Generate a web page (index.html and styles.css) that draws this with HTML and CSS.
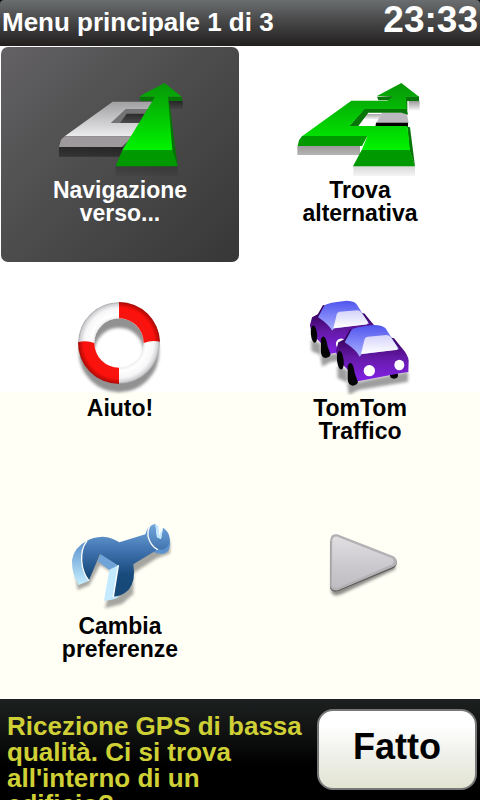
FILE: index.html
```html
<!DOCTYPE html>
<html lang="it">
<head>
    <meta charset="UTF-8">
    <meta name="viewport" content="width=device-width, initial-scale=1.0">
    <title>Menu principale</title>
    <link rel="stylesheet" href="styles.css">
</head>
<body>
<header class="topbar">
    <h1>Menu principale 1 di 3</h1>
    <time class="clock">23:33</time>
</header>

<!-- Main menu tiles -->
<main class="menu">
    <button type="button" class="tile selected">
        <svg class="icon" viewBox="0 -69 480 390" aria-hidden="true">
            <defs>
                <linearGradient id="road" x1="0" y1="0" x2="0" y2="1">
                    <stop offset="0" stop-color="#a09fa1"/>
                    <stop offset="1" stop-color="#ecebed"/>
                </linearGradient>
                <linearGradient id="green" gradientUnits="userSpaceOnUse" x1="0" y1="40" x2="0" y2="240">
                    <stop offset="0" stop-color="#079607"/>
                    <stop offset="1" stop-color="#00f400"/>
                </linearGradient>
                <linearGradient id="fade" x1="0" y1="0" x2="0" y2="1">
                    <stop offset="0" stop-color="#000" stop-opacity=".5"/>
                    <stop offset="1" stop-color="#000" stop-opacity=".05"/>
                </linearGradient>
            </defs>
            <path fill="url(#fade)" d="M57 231H250V260H57zM227 288H413V318H227z"/>
            <path fill="url(#fade)" d="M386 93H428V118H389z"/>
            <path fill="url(#fade)" d="M240 159L262 128H315L298 159z"/>
            <path fill="url(#road)" fill-rule="evenodd" d="M218 95H345L275 199H74zM258 118L213 159H300L325 118z"/>
            <path fill="#747374" d="M258 117L213 159H240L260 131H315L325 117z"/>
            <path fill="#9d999d" d="M74 199H280L245 231H57L63 209z"/>
            <path fill="#067506" d="M298 80L302 93H338L346 80zM384 80H425L427 93H387zM384 80L390 110L413 289L396 241L380 110z"/>
            <path fill="url(#green)" d="M374 39L425 80H384L397 241H247L345 80H298L316 69z"/>
            <path fill="#009a00" d="M247 240H397L413 289H227z"/>
        </svg>
        <span class="label">Navigazione<br>verso...</span>
    </button>

    <button type="button" class="tile">
        <svg class="icon" viewBox="0 -69 480 390" aria-hidden="true">
            <path fill="url(#fade)" opacity=".8" d="M52 228H240V255H52zM220 288H405V318H220z"/>
            <path fill="url(#fade)" opacity=".8" d="M386 93H419V121H386z"/>
            <path fill="url(#fade)" opacity=".7" d="M256 132H304L296 148H244z"/>
            <path fill="#bbb9bf" d="M306 128H380L386 160H288z"/>
            <path fill="#000" d="M288 158H384V172H286z"/>
            <path fill="#087508" d="M291 80L295 91H330L340 78zM378 79H417V93H382V134L376 118zM382 170L390 172L405 289L388 240z"/>
            <path fill="#087508" d="M254 115H378L384 134L365 128H265L235 168H208z"/>
            <path fill="url(#green)" d="M364 39L417 80H378L380 117H254L209 168H382L390 241H245L262 199H66L214 92H322L340 78H291z"/>
            <path fill="#009a00" d="M66 198H262L246 228H53L57 211zM245 240H389L405 289H219z"/>
        </svg>
        <span class="label">Trova<br>alternativa</span>
    </button>

    <button type="button" class="tile">
        <svg class="icon" viewBox="-60 -75 480 390" aria-hidden="true">
            <defs>
                <radialGradient id="ringWhite" gradientUnits="userSpaceOnUse" cx="177" cy="159" r="123">
                    <stop offset=".6" stop-color="#eeeeef"/>
                    <stop offset=".68" stop-color="#fff"/>
                    <stop offset=".85" stop-color="#f6f6f7"/>
                    <stop offset=".95" stop-color="#d2d2d5"/>
                    <stop offset="1" stop-color="#a2a3a5"/>
                </radialGradient>
                <radialGradient id="ringRed" gradientUnits="userSpaceOnUse" cx="177" cy="159" r="123">
                    <stop offset=".6" stop-color="#f51510"/>
                    <stop offset=".86" stop-color="#fd110c"/>
                    <stop offset="1" stop-color="#a80a06"/>
                </radialGradient>
                <filter id="soft" x="-20%" y="-20%" width="140%" height="140%">
                    <feGaussianBlur stdDeviation="5"/>
                </filter>
            </defs>
            <circle cx="177" cy="187" r="97" fill="none" stroke="#000" stroke-opacity=".43" stroke-width="46" filter="url(#soft)"/>
            <circle cx="177" cy="159" r="98" fill="none" stroke="url(#ringWhite)" stroke-width="49"/>
            <path fill="url(#ringRed)" d="M177 36A123 123 0 0 1 300 155Q276 149 251 159A74 74 0 0 0 177 85zM177 282A123 123 0 0 1 54 157Q78 149 103 159A74 74 0 0 0 177 233z"/>
        </svg>
        <span class="label">Aiuto!</span>
    </button>

    <button type="button" class="tile">
        <svg class="icon" viewBox="-30 -75 480 390" aria-hidden="true">
            <defs>
                <linearGradient id="carBody" gradientUnits="userSpaceOnUse" x1="0" y1="145" x2="0" y2="275">
                    <stop offset="0" stop-color="#38005c"/>
                    <stop offset=".45" stop-color="#651aa8"/>
                    <stop offset="1" stop-color="#8322e8"/>
                </linearGradient>
                <linearGradient id="carRoof" gradientUnits="userSpaceOnUse" x1="0" y1="105" x2="0" y2="195">
                    <stop offset="0" stop-color="#5055ed"/>
                    <stop offset="1" stop-color="#a5acff"/>
                </linearGradient>
                <linearGradient id="carGlass" x1="0" y1="0" x2="0" y2="1">
                    <stop offset="0" stop-color="#d4d2fa"/>
                    <stop offset="1" stop-color="#fff"/>
                </linearGradient>
                <g id="car">
                    <path fill="#000" fill-opacity=".38" filter="url(#soft)" d="M142 228L172 240L174 280L205 275L354 245V275L205 300L177 314L171 277L143 265z"/>
                    <ellipse cx="312" cy="256" rx="12" ry="10" fill="#050505"/>
                    <path fill="url(#carBody)" d="M163 148L145 157L138 183L144 210L174 240L196 275L334 249L355 246L356 212Q354 193 335 173L312 145L180 118z"/>
                    <path fill="url(#carRoof)" d="M184 120Q192 111 250 105Q273 104 286 114L327 178L215 193L209 200Q199 180 164 157z"/>
                    <path fill="url(#carGlass)" d="M224 146Q226 141 233 140L290 135Q299 136 302 141L322 171Q325 179 319 180L213 192z"/>
                    <ellipse cx="151" cy="211" rx="10" ry="28" fill="#050505" transform="rotate(-6 151 211)"/>
                    <path fill="#050505" d="M173 228Q177 216 184 220Q191 226 194 249L204 276Q201 286 188 287Q174 286 173 268z"/>
                    <ellipse cx="238" cy="242" rx="17" ry="17" fill="#fff"/>
                    <ellipse cx="328" cy="225" rx="15" ry="16" fill="#fff"/>
                </g>
            </defs>
            <use href="#car" transform="translate(-70 -66) scale(.94)"/>
            <use href="#car"/>
        </svg>
        <span class="label">TomTom<br>Traffico</span>
    </button>

    <button type="button" class="tile">
        <svg class="icon" viewBox="-30 -81 480 390" aria-hidden="true">
            <defs>
                <linearGradient id="steel" gradientUnits="userSpaceOnUse" x1="0" y1="45" x2="0" y2="220">
                    <stop offset="0" stop-color="#70a4da"/>
                    <stop offset=".45" stop-color="#3f72ae"/>
                    <stop offset=".85" stop-color="#184a7c"/>
                    <stop offset="1" stop-color="#164878"/>
                </linearGradient>
                <linearGradient id="steelEdge" x1="0" y1="0" x2="0" y2="1">
                    <stop offset="0" stop-color="#5a91cc"/>
                    <stop offset="1" stop-color="#c5eeff"/>
                </linearGradient>
            </defs>
            <path fill="#000" fill-opacity=".35" filter="url(#soft)" d="M72 160L83 240L118 225L150 165L190 190L165 295L216 282L250 252V190L320 145L360 130V90L250 130L150 110z"/>
            <path fill="url(#steelEdge)" d="M110 93Q73 111 66 150Q65 192 86 225L116 213L108 120z"/>
            <path fill="#5c93cf" d="M299 48Q284 66 290 90Q294 110 306 124Q327 136 347 129Q361 121 360 96L320 92z"/>
            <path fill="url(#steel)" d="M110 93Q128 81 158 80Q187 82 208 97L286 73Q292 48 316 41L321 82L333 87L339 53Q359 65 360 91Q357 112 340 119L324 118L250 163Q258 213 236 239Q217 258 190 260L205 167L150 133L116 212Q97 190 94 154Q93 113 110 93z"/>
            <path fill="#70a4d9" d="M152 133L205 167L178 180L143 154z"/>
            <path fill="#c3eaff" d="M205 166L190 260L210 259Q190 272 162 272L178 179z"/>
            <path fill="#bfe7ff" d="M316 41L321 82L333 87L339 53L327 78L326 50z"/>
            <path fill="none" stroke="#fff" stroke-width="4" stroke-linecap="round" d="M110 94Q93 115 95 153Q98 189 116 211M299 48Q292 62 294 79Q302 108 322 118M205 167L190 260"/>
        </svg>
        <span class="label">Cambia<br>preferenze</span>
    </button>

    <button type="button" class="tile" aria-label="Pagina successiva">
        <svg class="icon" viewBox="-90 -81 480 390" aria-hidden="true">
            <defs>
                <linearGradient id="silver" x1="0" y1="0" x2="0" y2="1">
                    <stop offset="0" stop-color="#e1dfe2"/>
                    <stop offset=".6" stop-color="#cac8cc"/>
                    <stop offset="1" stop-color="#bfbdc1"/>
                </linearGradient>
            </defs>
            <path fill="#000" fill-opacity=".45" filter="url(#soft)" d="M66 94L256 165V178L93 253Q71 262 64 247z"/>
            <path fill="#555454" d="M61 92V236Q68 248 85 243L251 174Q262 165 261 154z"/>
            <path fill="#b3b1b4" d="M61 88Q63 70 82 73L251 139Q262 147 261 157Q260 166 249 171L86 240Q65 246 61 228z"/>
            <path fill="url(#silver)" d="M67 91Q69 78 82 80L246 145Q255 152 247 163L87 232Q69 237 66 224z"/>
        </svg>
    </button>
</main>

<!-- GPS status and confirm button -->
<footer class="statusbar">
    <p class="status">Ricezione GPS di bassa qualità. Ci si trova all'interno di un edificio?</p>
    <button type="button" class="done">Fatto</button>
</footer>
</body>
</html>
```
FILE: styles.css
```css
* {
    box-sizing: border-box;
}

body {
    margin: 0;
    min-height: 100vh;
    display: flex;
    flex-direction: column;
    font-family: "Liberation Sans", Arial, sans-serif;
    font-weight: bold;
    color: #000;
    background: #000;
}

button {
    border: none;
    font: inherit;
    color: inherit;
    cursor: pointer;
}

.topbar {
    display: flex;
    justify-content: space-between;
    align-items: center;
    height: 46px;
    padding: 0 2px;
    border-radius: 4px 4px 0 0;
    background: linear-gradient(#6b6e70, #484848 45%, #231f1f);
    color: #fff;
}

.topbar h1 {
    margin: 0;
    font-size: 26px;
    line-height: 44px;
    padding-bottom: 2px;
}

.clock {
    font-size: 37px;
    line-height: 42px;
    padding-bottom: 6px;
}

.menu {
    flex: 1;
    display: grid;
    grid-template-columns: 1fr 1fr;
    grid-template-rows: repeat(3, 1fr);
    gap: 3px 2px;
    padding: 1px;
    background: linear-gradient(#fff 53%, #fffff6 53%);
}

.tile {
    display: flex;
    flex-direction: column;
    align-items: center;
    padding: 0;
    border-radius: 7px;
    background: none;
}

.tile.selected {
    background: linear-gradient(135deg, #636164, #4d4d4d 45%, #373737);
    color: #fff;
}

.icon {
    width: 160px;
    height: 130px;
}

.label {
    margin-top: 2px;
    font-size: 23px;
    line-height: 23px;
}

.statusbar {
    display: flex;
    align-items: flex-start;
    justify-content: space-between;
    height: 101px;
    padding: 10px 3px 0 7px;
    overflow: hidden;
    background: linear-gradient(#1d2020, #101111 35%, #000 65%);
}

.status {
    flex: 1;
    margin: 4px 0 0;
    font-size: 26px;
    line-height: 26px;
    color: #cfd035;
}

.done {
    width: 160px;
    height: 81px;
    margin-left: 10px;
    padding: 0 0 6px;
    border: 2px solid #777;
    border-radius: 16px;
    background: linear-gradient(#fff 20%, #f2f2ee 50%, #e2e4d2);
    font-size: 36px;
}
```
